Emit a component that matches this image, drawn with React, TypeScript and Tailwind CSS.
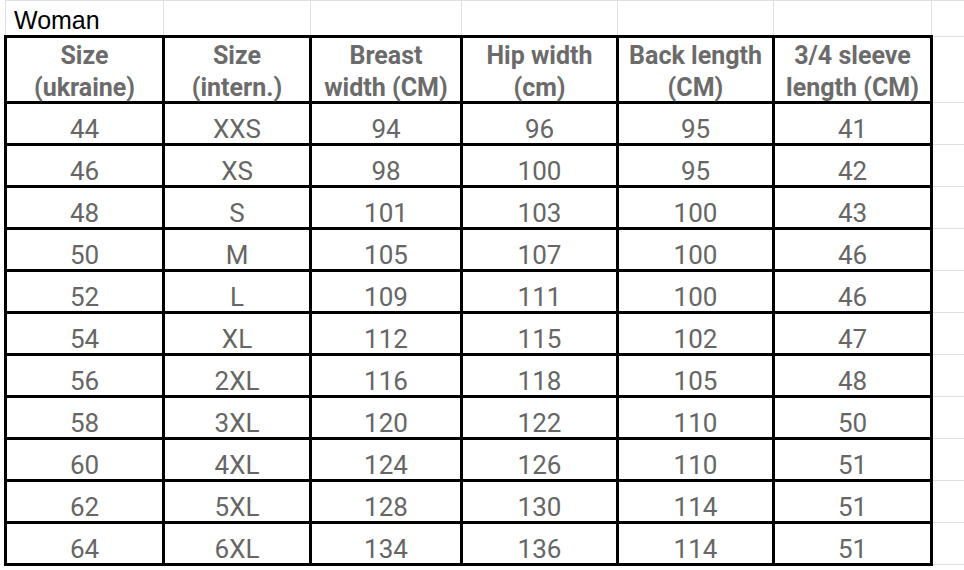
import React from 'react'

const headers = [
  ['Size', '(ukraine)'],
  ['Size', '(intern.)'],
  ['Breast', 'width (CM)'],
  ['Hip width', '(cm)'],
  ['Back length', '(CM)'],
  ['3/4 sleeve', 'length (CM)'],
]

const rows = [
  ['44', 'XXS', '94', '96', '95', '41'],
  ['46', 'XS', '98', '100', '95', '42'],
  ['48', 'S', '101', '103', '100', '43'],
  ['50', 'M', '105', '107', '100', '46'],
  ['52', 'L', '109', '111', '100', '46'],
  ['54', 'XL', '112', '115', '102', '47'],
  ['56', '2XL', '116', '118', '105', '48'],
  ['58', '3XL', '120', '122', '110', '50'],
  ['60', '4XL', '124', '126', '110', '51'],
  ['62', '5XL', '128', '130', '114', '51'],
  ['64', '6XL', '134', '136', '114', '51'],
]

const App = () => {
  return (
    <div className="w-[964px] h-[570px] overflow-hidden bg-white pl-[4px]">
      <table className="w-[966px] border-collapse table-fixed font-['Roboto',sans-serif] text-[#666666]">
        <colgroup>
          <col className="w-[158px]" />
          <col className="w-[147px]" />
          <col className="w-[151px]" />
          <col className="w-[156px]" />
          <col className="w-[156px]" />
          <col className="w-[158px]" />
          <col className="w-[40px]" />
        </colgroup>
        <tbody>
          {/* Title row */}
          <tr className="h-[36px]">
            <td className="border border-[#e0e0e0] p-0 align-top">
              <div className="h-[34px] pl-[8px] pt-[7px] font-['Liberation_Sans',Arial,sans-serif] text-[25px] leading-none text-black">
                Woman
              </div>
            </td>
            <td className="border border-[#e0e0e0]"></td>
            <td className="border border-[#e0e0e0]"></td>
            <td className="border border-[#e0e0e0]"></td>
            <td className="border border-[#e0e0e0]"></td>
            <td className="border border-[#e0e0e0]"></td>
            <td className="border border-[#e0e0e0]"></td>
          </tr>

          {/* Header */}
          <tr className="h-[66px]">
            {headers.map((h, i) => (
              <td key={i} className="border-[3px] border-black p-0 align-top">
                <div className="h-[62px] pt-[2px] text-center text-[25px] font-bold leading-[32px] whitespace-nowrap text-[#6b6b6b]">
                  {h[0]}
                  <br />
                  {h[1]}
                </div>
              </td>
            ))}
            <td className="border border-[#e0e0e0]"></td>
          </tr>

          {/* Data */}
          {rows.map((r, ri) => (
            <tr key={ri} className="h-[42px]">
              {r.map((v, ci) => (
                <td key={ci} className="border-[3px] border-black p-0 align-top">
                  <div className="h-[38px] pt-[12px] text-center text-[26px] leading-none">
                    {v}
                  </div>
                </td>
              ))}
              <td className="border border-[#e0e0e0]"></td>
            </tr>
          ))}
        </tbody>
      </table>
    </div>
  )
}

export default App
